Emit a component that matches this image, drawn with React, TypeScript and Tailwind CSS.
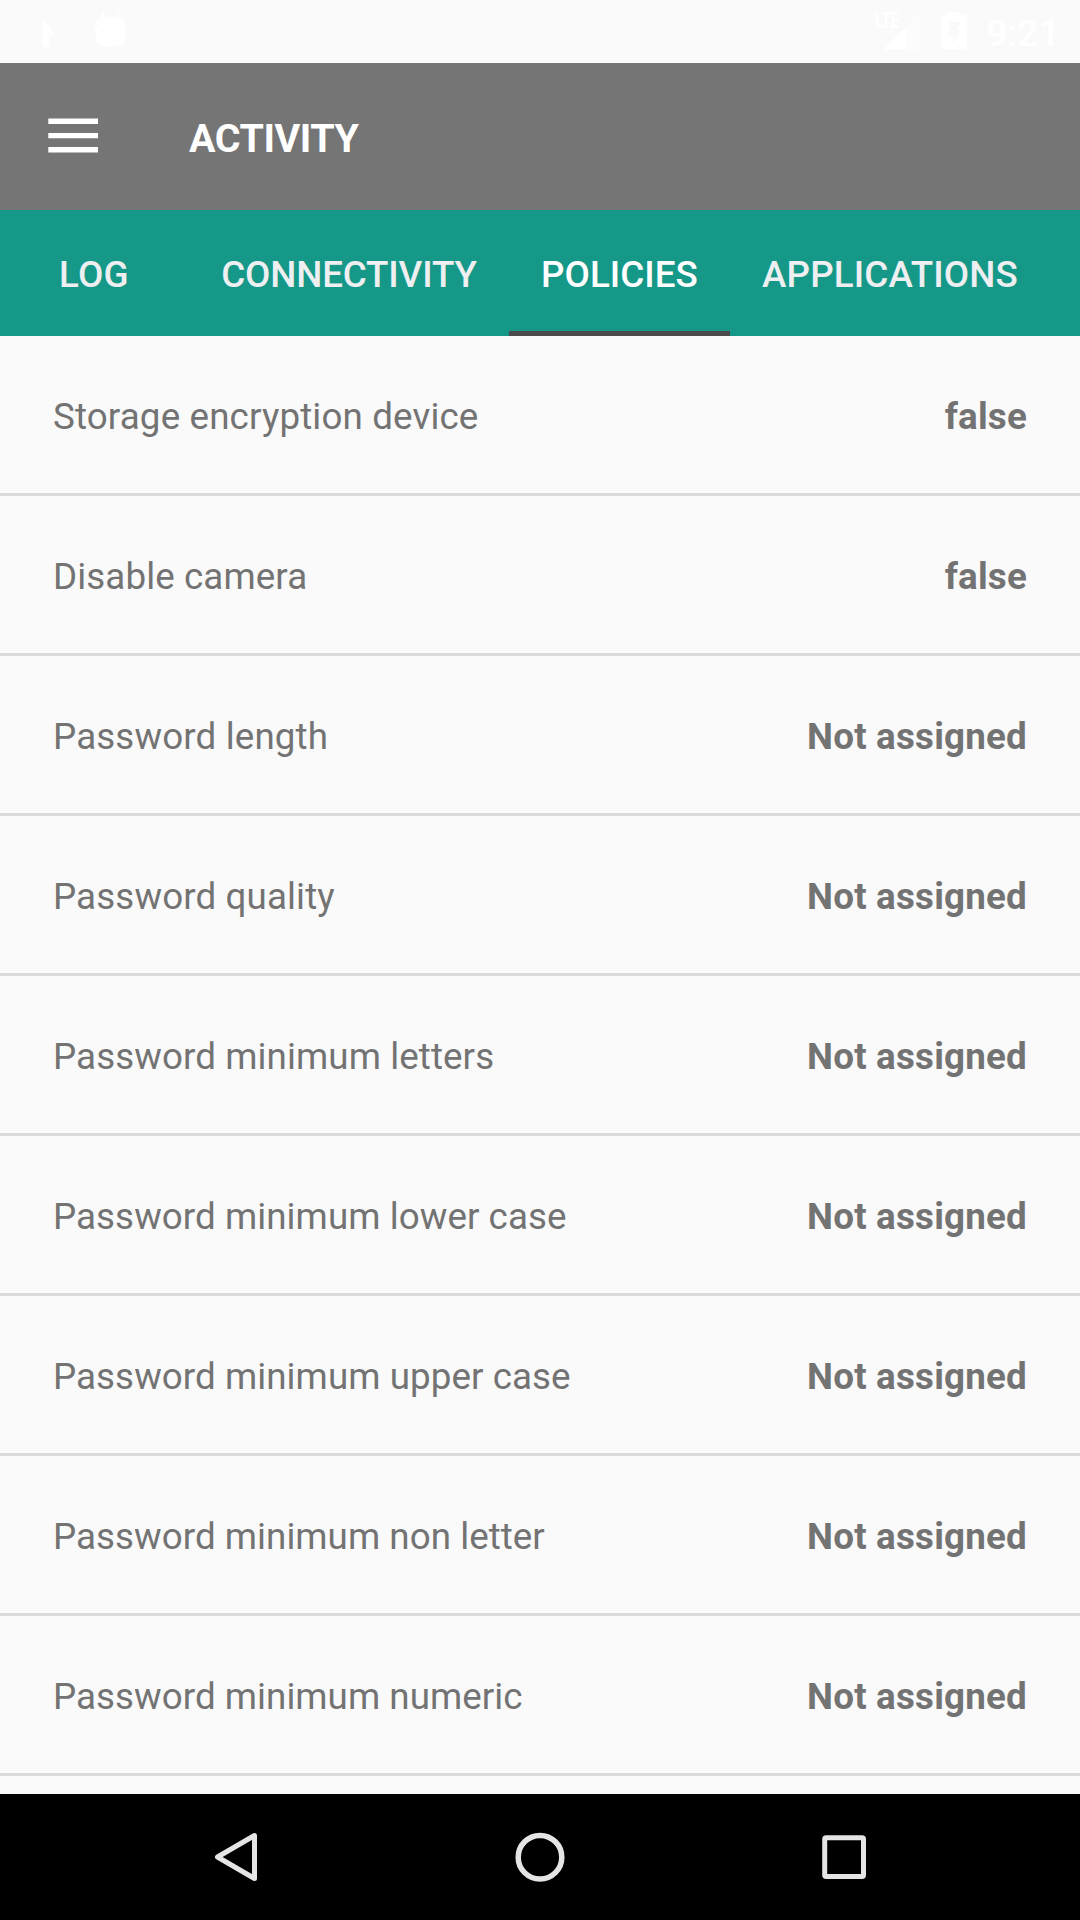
const policies: [string, string, string][] = [
  ['Storage encryption device', 'false', 'tracking-[0.14px]'],
  ['Disable camera', 'false', 'tracking-[0.1px]'],
  ['Password length', 'Not assigned', 'tracking-[0.14px]'],
  ['Password quality', 'Not assigned', 'tracking-[0.12px]'],
  ['Password minimum letters', 'Not assigned', 'tracking-[0.09px]'],
  ['Password minimum lower case', 'Not assigned', 'tracking-[0.06px]'],
  ['Password minimum upper case', 'Not assigned', 'tracking-[0.06px]'],
  ['Password minimum non letter', 'Not assigned', 'tracking-[0.04px]'],
  ['Password minimum numeric', 'Not assigned', 'tracking-[0.04px]'],
];

function StatusBar() {
  return (
    <div className="flex h-[63px] shrink-0 items-start justify-between bg-[#fafafa] text-white">
      <div className="flex pl-[43px]">
        <svg className="h-[63px] w-[52px]" viewBox="0 0 52 63" fill="currentColor">
          <path d="M0 17.500L12 35H5.500V47H0Z" />
        </svg>
        <svg className="h-[63px] w-[32px]" viewBox="0 0 32 63" fill="currentColor">
          <path
            fillRule="evenodd"
            d="M6 11.500L8 11L10 17Q16 16 22 17L24 11L25 11.500L24 17.500Q30 19 30.500 25V34Q30 43 27 45Q16 48 4 45Q1 43 .5 34V25Q1 19 7.500 17.500ZM8 30a1.600 1.600 0 1 0 0 3.200a1.600 1.600 0 0 0 0-3.200ZM22.500 30a1.600 1.600 0 1 0 0 3.200a1.600 1.600 0 0 0 0-3.200Z"
          />
        </svg>
      </div>
      <div className="flex h-[63px] pr-[20px]">
        <div className="relative h-[63px] w-[46px]">
          <svg className="h-[63px] w-[46px]" viewBox="0 0 46 63" fill="currentColor">
            <path opacity=".35" d="M45 13V49.500H8.500Z" />
            <path d="M31 27V49.500H8.500Z" />
          </svg>
          <span className="absolute left-0 top-[10px] origin-left scale-x-[0.7] text-[22px] font-bold leading-[22px] tracking-[-0.5px]">LTE</span>
        </div>
        <svg className="ml-[21px] h-[63px] w-[26px]" viewBox="0 0 26 63" fill="currentColor">
          <path fillRule="evenodd" d="M6.500 12H18.500V15H25V49.500H0V15H6.500ZM7.500 22L6.300 36H12L7.700 46L20.300 30H15L19.700 22Z" />
        </svg>
        <span className="ml-[18px] mt-[12px] text-[37.500px] font-medium leading-[42px]">9:21</span>
      </div>
    </div>
  );
}

function Header() {
  return (
    <header className="flex h-[147px] shrink-0 items-center bg-[#757575] pl-[48px] text-white">
      <button className="pb-[2px]" aria-label="Menu">
        <svg className="block h-[35px] w-[50px]" viewBox="0 0 50 35" fill="currentColor">
          <path d="M.3 .6H50V6H.3ZM.3 14.900H50V20.300H.3ZM.3 29.100H50V34.500H.3Z" />
        </svg>
      </button>
      <h1 className="ml-[91px] pt-[5px] text-[39.400px] font-bold tracking-[-0.45px]">ACTIVITY</h1>
    </header>
  );
}

function Tabs() {
  return (
    <nav className="flex h-[126px] shrink-0 bg-[#159888] text-[36.750px] font-medium text-[#eeeff1]">
      <div className="flex w-[189px] items-center justify-center pr-px pt-[4px] tracking-[0.3px]">LOG</div>
      <div className="flex w-[320px] items-center justify-center pt-[4px] tracking-[-0.15px]">CONNECTIVITY</div>
      <div className="relative flex w-[221px] items-center justify-center pt-[4px] tracking-[0.05px] text-white">
        POLICIES
        <span className="absolute bottom-0 left-0 h-[5px] w-full bg-[#4a4a4a]" />
      </div>
      <div className="flex w-[320px] items-center justify-center pt-[4px] tracking-[0.15px]">APPLICATIONS</div>
    </nav>
  );
}

export default function App() {
  return (
    <div className="flex h-[1920px] w-[1080px] flex-col overflow-hidden bg-[#fafafa] font-['Roboto',sans-serif]">
      <StatusBar />
      <Header />
      <Tabs />
      <main className="min-h-0 flex-1 overflow-hidden">
        {policies.map(([name, value, tracking]) => (
          <div
            key={name}
            className="flex h-[160px] items-center justify-between border-b-[3px] border-[#dadada] px-[53px] pt-[4px] text-[36.750px] text-[#737373]"
          >
            <span className={tracking}>{name}</span>
            <span className="font-bold tracking-[0.2px]">{value}</span>
          </div>
        ))}
      </main>
      <footer className="h-[126px] shrink-0 bg-black">
        <div className="flex h-full items-center justify-between pl-[214px] pr-[213px]">
          <svg className="h-[52px] w-[44px]" viewBox="0 0 44 52" fill="none" stroke="#e5e5e5" strokeWidth="5" strokeLinejoin="round">
            <path d="M40.500 4.500V47.500L3.500 26Z" />
          </svg>
          <svg className="h-[52px] w-[52px]" viewBox="0 0 52 52" fill="none" stroke="#e5e5e5" strokeWidth="5.500">
            <circle cx="26" cy="26.200" r="21.800" />
          </svg>
          <svg className="h-[46px] w-[46px]" viewBox="0 0 46 46" fill="none" stroke="#e5e5e5" strokeWidth="5">
            <rect x="3.700" y="3.700" width="38.800" height="38.800" rx="1.500" />
          </svg>
        </div>
      </footer>
    </div>
  );
}
